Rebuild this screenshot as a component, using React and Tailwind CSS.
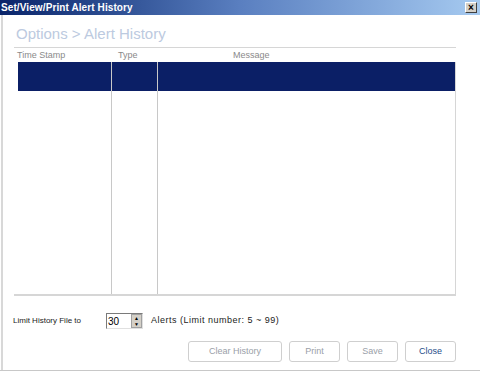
import React from 'react'

const BUTTONS = [
  { label: 'Clear History', w: 'w-[94px]', text: 'text-[#9aa0a8]' },
  { label: 'Print', w: 'w-[51px]', text: 'text-[#9aa0a8]' },
  { label: 'Save', w: 'w-[51px]', text: 'text-[#9aa0a8]' },
  { label: 'Close', w: 'w-[51px]', text: 'text-[#1f4e8a]' },
]

export default function App() {
  return (
    <div
      className="w-[480px] h-[373px] bg-white flex flex-col overflow-hidden text-[9px] text-[#333]"
      style={{ fontFamily: '"Liberation Sans", Arial, sans-serif' }}
    >
      {/* title bar */}
      <div className="h-[15px] flex items-center justify-between pl-[1px] pr-[3px] bg-gradient-to-r from-[#0a246a] via-[#5a7fc0] to-[#a6caf0]">
        <span className="text-white font-bold text-[10px] tracking-[0.1px]">Set/View/Print Alert History</span>
        <div className="w-[12px] h-[11px] bg-[#d4d0c8] border border-t-white border-l-white border-r-[#404040] border-b-[#404040] flex items-center justify-center text-[10px] leading-none font-bold text-black">
          ×
        </div>
      </div>

      <div className="flex-1 flex border-b border-[#c8c8c8] mb-[2px]">
        <div className="w-[2px] border-l border-[#d8d8d8] ml-[1px] mr-[2px] border-r" />
        <div className="flex-1 flex flex-col pl-[9px] pr-[24px]">
          <div className="text-[15px] text-[#bccae0] pt-[8px] h-[32px] pl-[2px]">Options &gt; Alert History</div>

          {/* table */}
          <div className="h-[249px] border-t border-b-2 border-[#d6d6d6] flex flex-col">
            <div className="h-[14px] flex items-center text-[#8a8a8a] text-[9px] pt-[1px]">
              <span className="w-[104px] pl-[3px]">Time Stamp</span>
              <span className="w-[115px]">Type</span>
              <span>Message</span>
            </div>
            <div className="flex-1 flex ml-[4px] border-r border-[#d6d6d6]">
              <div className="w-[94px] border-r border-[#c8c8c8] flex flex-col">
                <div className="h-[29px] bg-[#0b1f66]" />
              </div>
              <div className="w-[46px] border-r border-[#c8c8c8] flex flex-col">
                <div className="h-[29px] bg-[#0b1f66]" />
              </div>
              <div className="flex-1 flex flex-col">
                <div className="h-[29px] bg-[#0b1f66]" />
              </div>
            </div>
          </div>

          {/* limit row */}
          <div className="flex items-center h-[22px] mt-[14px] text-[#222]">
            <span className="w-[93px] text-[8px] -ml-[1px]">Limit History File to</span>
            <div className="w-[37px] h-[16px] border border-t-[#7a7a7a] border-l-[#7a7a7a] border-r-[#e0e0e0] border-b-[#e0e0e0] flex items-center">
              <span className="flex-1 pl-[1px] text-[10px] text-black">30</span>
              <div className="w-[11px] h-[14px] flex flex-col bg-[#d4d0c8] border border-[#a0a0a0]">
                <div className="flex-1 flex items-center justify-center text-[5px] leading-none text-black">▲</div>
                <div className="flex-1 flex items-center justify-center text-[5px] leading-none text-black">▼</div>
              </div>
            </div>
            <span className="ml-[8px] tracking-[0.5px]">Alerts (Limit number: 5 ~ 99)</span>
          </div>

          {/* buttons */}
          <div className="flex justify-end gap-[7px] mt-[9px]">
            {BUTTONS.map(b => (
              <div
                key={b.label}
                className={`${b.w} h-[21px] rounded-[3px] border border-[#cfcfcf] bg-white flex items-center justify-center text-[9px] ${b.text}`}
              >
                {b.label}
              </div>
            ))}
          </div>
        </div>
      </div>
    </div>
  )
}
